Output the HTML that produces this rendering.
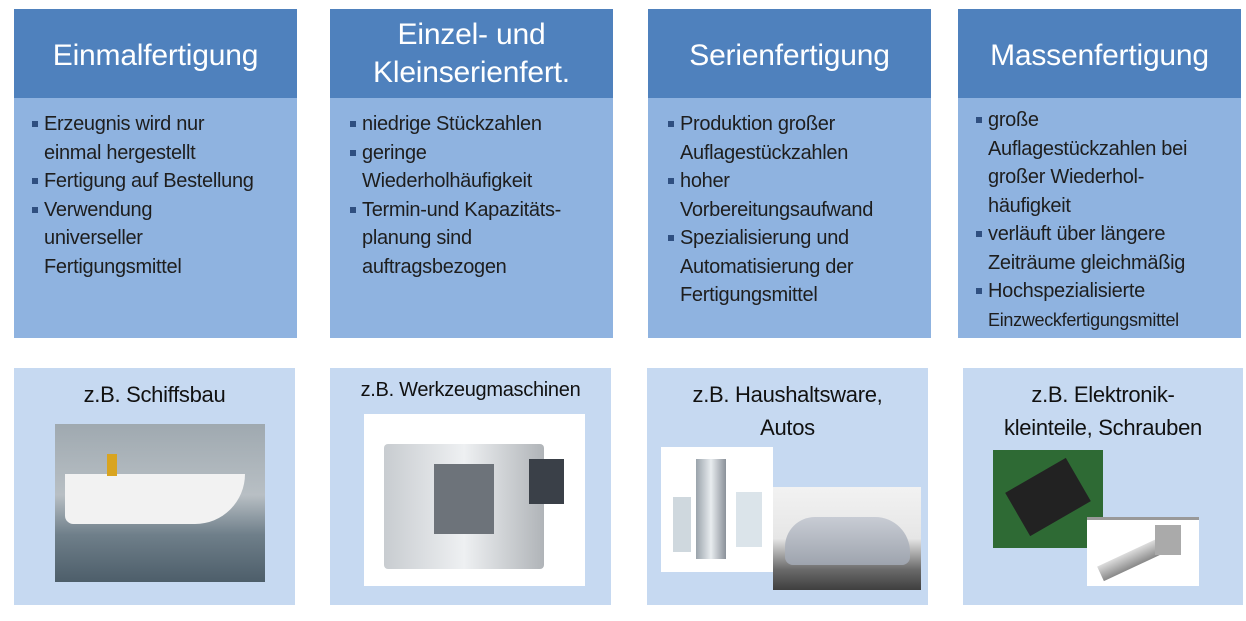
<!DOCTYPE html>
<html><head><meta charset="utf-8"><style>
body{margin:0;width:1246px;height:621px;background:#fff;position:relative;overflow:hidden;font-family:"Liberation Sans",sans-serif;}
.h{position:absolute;background:#4f81bd;color:#fff;font-size:30px;text-align:center;display:flex;align-items:center;justify-content:center;line-height:38px;letter-spacing:-0.2px;padding-top:4px;box-sizing:border-box}
.b{position:absolute;background:#8fb3e0;color:#1e1e1e;font-size:20px;line-height:28.5px;letter-spacing:-0.3px;white-space:nowrap}
.b ul{list-style:none;margin:0;padding:0}
.b li{position:relative;padding-left:14px}
.b li:before{content:"";position:absolute;left:2px;top:11px;width:6px;height:6px;background:#2f4f80}
.c{position:absolute;background:#c6d9f1;color:#111;font-size:22px;text-align:center;line-height:33px;letter-spacing:-0.3px}
.img{position:absolute}
</style></head><body>
<div class="h" style="left:14px;top:9px;width:283px;height:89px">Einmalfertigung</div>
<div class="h" style="left:330px;top:9px;width:283px;height:89px;padding-top:0">Einzel- und<br>Kleinserienfert.</div>
<div class="h" style="left:648px;top:9px;width:283px;height:89px">Serienfertigung</div>
<div class="h" style="left:958px;top:9px;width:283px;height:89px">Massenfertigung</div>

<div class="b" style="left:14px;top:98px;width:267px;height:227px;padding:12px 0 1px 16px"><ul>
<li>Erzeugnis wird nur<br>einmal hergestellt</li><li>Fertigung auf Bestellung</li><li>Verwendung<br>universeller<br>Fertigungsmittel</li></ul></div>
<div class="b" style="left:330px;top:98px;width:265px;height:227px;padding:12px 0 1px 18px"><ul>
<li>niedrige Stückzahlen</li><li>geringe<br>Wiederholhäufigkeit</li><li>Termin-und Kapazitäts-<br>planung sind<br>auftragsbezogen</li></ul></div>
<div class="b" style="left:648px;top:98px;width:265px;height:227px;padding:12px 0 1px 18px"><ul>
<li>Produktion großer<br>Auflagestückzahlen</li><li>hoher<br>Vorbereitungsaufwand</li><li>Spezialisierung und<br>Automatisierung der<br>Fertigungsmittel</li></ul></div>
<div class="b" style="left:958px;top:98px;width:267px;height:232px;padding:8px 0 0 16px"><ul>
<li>große<br>Auflagestückzahlen bei<br>großer Wiederhol-<br>häufigkeit</li><li>verläuft über längere<br>Zeiträume gleichmäßig</li><li>Hochspezialisierte<br><span style="font-size:18px">Einzweckfertigungsmittel</span></li></ul></div>

<div class="c" style="left:14px;top:368px;width:281px;height:237px"><div style="margin-top:10px">z.B. Schiffsbau</div></div>
<div class="c" style="left:330px;top:368px;width:281px;height:237px;font-size:20px"><div style="margin-top:6px">z.B. Werkzeugmaschinen</div></div>
<div class="c" style="left:647px;top:368px;width:281px;height:237px"><div style="margin-top:10px">z.B. Haushaltsware,<br>Autos</div></div>
<div class="c" style="left:963px;top:368px;width:280px;height:237px"><div style="margin-top:10px">z.B. Elektronik-<br>kleinteile, Schrauben</div></div>

<div class="img" style="left:55px;top:424px;width:210px;height:158px;background:linear-gradient(#9fa9b0 0%,#b8bfc4 45%,#6f7f8a 70%,#4d5e6a 100%)">
<div style="position:absolute;left:10px;top:50px;width:180px;height:50px;background:#f2f2f2;border-radius:0 0 60px 10px"></div>
<div style="position:absolute;left:52px;top:30px;width:10px;height:22px;background:#d9a420"></div>
</div>
<div class="img" style="left:364px;top:414px;width:221px;height:172px;background:#fff">
<div style="position:absolute;left:20px;top:30px;width:160px;height:125px;background:linear-gradient(90deg,#c8ccd0,#eef0f2,#b0b4b8);border-radius:4px"></div>
<div style="position:absolute;left:70px;top:50px;width:60px;height:70px;background:#6d737a"></div>
<div style="position:absolute;left:165px;top:45px;width:35px;height:45px;background:#3a4048"></div>
</div>
<div class="img" style="left:661px;top:447px;width:112px;height:125px;background:#fff">
<div style="position:absolute;left:35px;top:12px;width:30px;height:100px;background:linear-gradient(90deg,#9aa3ab,#e8ecef,#8a9199)"></div>
<div style="position:absolute;left:12px;top:50px;width:18px;height:55px;background:#cfd8de"></div>
<div style="position:absolute;left:75px;top:45px;width:26px;height:55px;background:#dbe4ea"></div>
</div>
<div class="img" style="left:773px;top:487px;width:148px;height:103px;background:linear-gradient(#f2f2f2 0%,#e6e6e6 50%,#6a6a6a 80%,#3f3f3f 100%)">
<div style="position:absolute;left:12px;top:30px;width:125px;height:48px;background:linear-gradient(#c8ccd4,#9ea4ae);border-radius:30px 35px 8px 8px"></div>
</div>
<div class="img" style="left:993px;top:450px;width:110px;height:98px;background:#2e6a34">
<div style="position:absolute;left:20px;top:22px;width:70px;height:50px;background:#222;transform:rotate(-30deg)"></div>
</div>
<div class="img" style="left:1087px;top:517px;width:112px;height:66px;background:#fff;border-top:3px solid #999">
<div style="position:absolute;left:10px;top:30px;width:75px;height:16px;background:linear-gradient(#ddd,#888);transform:rotate(-25deg)"></div>
<div style="position:absolute;left:68px;top:5px;width:26px;height:30px;background:#aaa"></div>
</div>
</body></html>
